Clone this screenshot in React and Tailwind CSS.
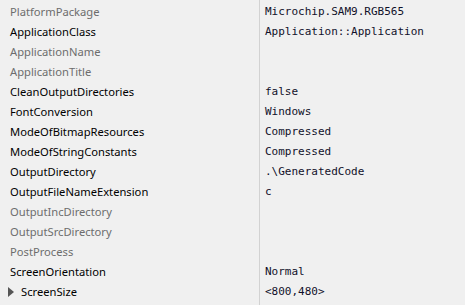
import React from "react";

const rows = [
  { name: "PlatformPackage", value: "Microchip.SAM9.RGB565", dim: true },
  { name: "ApplicationClass", value: "Application::Application" },
  { name: "ApplicationName", value: "", dim: true },
  { name: "ApplicationTitle", value: "", dim: true },
  { name: "CleanOutputDirectories", value: "false" },
  { name: "FontConversion", value: "Windows" },
  { name: "ModeOfBitmapResources", value: "Compressed" },
  { name: "ModeOfStringConstants", value: "Compressed" },
  { name: "OutputDirectory", value: ".\\GeneratedCode" },
  { name: "OutputFileNameExtension", value: "c" },
  { name: "OutputIncDirectory", value: "", dim: true },
  { name: "OutputSrcDirectory", value: "", dim: true },
  { name: "PostProcess", value: "", dim: true },
  { name: "ScreenOrientation", value: "Normal" },
  { name: "ScreenSize", value: "<800,480>", expand: true },
];

export default function App() {
  return (
    <div className="w-[465px] h-[305px] bg-[#f0f0f0] overflow-hidden pt-[2px]">
      <div className="relative">
        <div className="absolute left-[259px] top-[-2px] h-[305px] w-px bg-[#d2d2d2]" />
        {rows.map((r) => (
          <div key={r.name} className="flex h-5 items-center">
            <div
              className={
                "w-[259px] flex items-center text-[11.2px] font-['Noto_Sans',sans-serif] " +
                (r.dim ? "text-[#6d6d6d]" : "text-black")
              }
            >
              {r.expand ? (
                <>
                  <svg width="6" height="10" viewBox="0 0 6 10" className="ml-[8px] mr-[7px]">
                    <path d="M0 0 L6 5 L0 10 Z" fill="#555" />
                  </svg>
                  <span>{r.name}</span>
                </>
              ) : (
                <span className="pl-[10px]">{r.name}</span>
              )}
            </div>
            <div className="pl-[6px] text-[11px] text-[#10102a] font-['DejaVu_Sans_Mono',monospace] whitespace-pre">
              {r.value}
            </div>
          </div>
        ))}
      </div>
    </div>
  );
}
